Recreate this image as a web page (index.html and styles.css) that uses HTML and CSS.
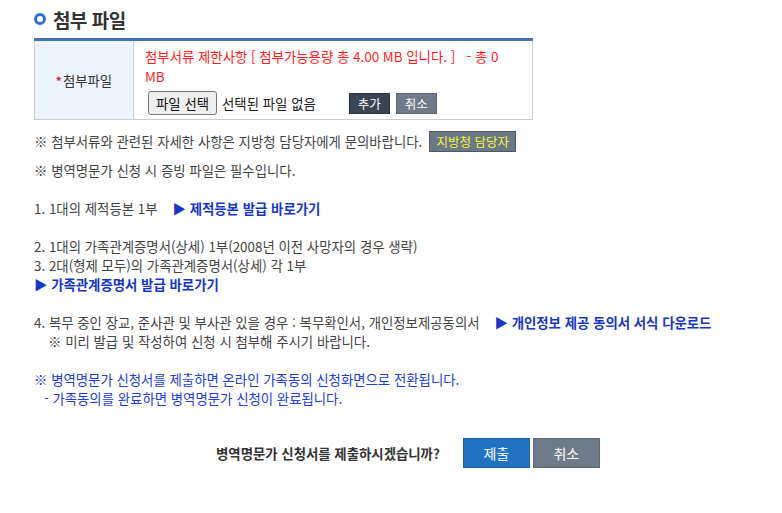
FILE: index.html
```html
<!DOCTYPE html>
<html lang="ko">
<head>
<meta charset="utf-8">
<link rel="stylesheet" href="styles.css">
</head>
<body>
<div class="page">
  <h2 class="title"><span class="ring"></span>첨부 파일</h2>
  <table class="form">
    <tr>
      <th><span class="req">*</span>첨부파일</th>
      <td>
        <div class="limit">첨부서류 제한사항 [ 첨부가능용량 총 4.00 MB 입니다. ]&nbsp;&nbsp; - 총 0 MB</div>
        <div class="filerow">
          <span class="filebtn">파일 선택</span>
          <span class="nofile">선택된 파일 없음</span>
          <span class="sbtn dark">추가</span>
          <span class="sbtn gray">취소</span>
        </div>
      </td>
    </tr>
  </table>

  <p class="note first">※ 첨부서류와 관련된 자세한 사항은 지방청 담당자에게 문의바랍니다.<span class="staff">지방청 담당자</span></p>
  <p class="note second">※ 병역명문가 신청 시 증빙 파일은 필수입니다.</p>

  <p class="block">1. 1대의 제적등본 1부 &nbsp;&nbsp; <a class="link">▶ 제적등본 발급 바로가기</a></p>

  <div class="block">
    <p>2. 1대의 가족관계증명서(상세) 1부(2008년 이전 사망자의 경우 생략)</p>
    <p>3. 2대(형제 모두)의 가족관계증명서(상세) 각 1부</p>
    <p><a class="link">▶ 가족관계증명서 발급 바로가기</a></p>
  </div>

  <div class="block">
    <p>4. 복무 중인 장교, 준사관 및 부사관 있을 경우 : 복무확인서, 개인정보제공동의서 &nbsp;&nbsp; <a class="link">▶ 개인정보 제공 동의서 서식 다운로드</a></p>
    <p class="indent">※ 미리 발급 및 작성하여 신청 시 첨부해 주시기 바랍니다.</p>
  </div>

  <div class="block blue">
    <p>※ 병역명문가 신청서를 제출하면 온라인 가족동의 신청화면으로 전환됩니다.</p>
    <p class="indent2">- 가족동의를 완료하면 병역명문가 신청이 완료됩니다.</p>
  </div>

  <div class="confirm">
    <span class="question">병역명문가 신청서를 제출하시겠습니까?</span>
    <span class="bigbtn submit">제출</span>
    <span class="bigbtn cancel">취소</span>
  </div>
</div>
</body>
</html>
```

FILE: styles.css
```css
* { box-sizing: border-box; }
html, body { margin: 0; padding: 0; background: #fff; }
body {
  font-family: "Malgun Gothic", "Noto Sans CJK KR", "Noto Sans", sans-serif;
  font-size: 13.4px;
  color: #444;
}
p { margin: 0; line-height: 19px; }
.page { padding: 6px 0 0 34px; width: 760px; }

.title {
  margin: 0;
  display: flex;
  align-items: center;
  font-size: 19px;
  font-weight: 700;
  color: #333;
  height: 26px;
  letter-spacing: -0.5px;
}
.ring {
  width: 12px; height: 12px;
  border: 3px solid #2e6fd0;
  border-radius: 50%;
  margin: 0 7px 0 0;
}

.form {
  margin-top: 6px;
  width: 499px;
  border-collapse: collapse;
  border-top: 3px solid #4470b8;
  border-bottom: 1px solid #ccc;
}
.form th {
  width: 99px;
  background: #eef4fd;
  border-left: 1px solid #ccc;
  border-right: 1px solid #ccc;
  font-weight: 400;
  color: #333;
  font-size: 13.4px;
  padding: 0;
}
.req { color: #d0282e; font-weight: 700; font-size: 12px; margin-right: 1px; }
.form td {
  border-right: 1px solid #ccc;
  padding: 5px 22px 4px 11px;
  vertical-align: top;
}
.limit { color: #ff1c1c; line-height: 20px; }
.filerow { display: flex; align-items: center; margin-top: 5px; height: 24px; }
.filebtn {
  display: inline-flex; align-items: center; justify-content: center;
  height: 24px; padding: 0 7px;
  margin-left: 3px;
  border: 1px solid #767676;
  border-radius: 3px;
  background: #efefef;
  color: #111;
}
.nofile { margin-left: 5px; color: #222; }
.sbtn {
  display: inline-flex; align-items: center; justify-content: center;
  width: 41px; height: 21px;
  color: #fff; font-size: 12.5px;
  border: 1px solid transparent;
}
.sbtn.dark { background: #3b4653; border-color: #2d3742; margin-left: 33px; }
.sbtn.gray { background: #6f7b88; border-color: #5e6875; margin-left: 6px; }

.note.first { margin-top: 11px; display: flex; align-items: center; height: 21px; }
.staff {
  display: inline-flex; align-items: center; justify-content: center;
  width: 87px; height: 21px;
  margin-left: 7px;
  background: #6c7885;
  border: 1px solid #4f5864;
  color: #f5f53a;
  font-size: 12.5px;
}
.note.second { margin-top: 9px; }
.block { margin-top: 19px; }
.link { color: #1537c4; font-weight: 700; text-decoration: none; }
.indent { padding-left: 14px; }
.blue { color: #2240d6; }
.indent2 { padding-left: 10px; }

.confirm {
  margin-top: 30px;
  display: flex;
  align-items: center;
  padding-left: 182px;
}
.question { font-weight: 700; color: #333; }
.bigbtn {
  display: inline-flex; align-items: center; justify-content: center;
  width: 67px; height: 30px;
  color: #fff; font-size: 14px;
  border: 1px solid transparent;
}
.bigbtn.submit { background: #2272c3; border-color: #1c60a8; margin-left: 23px; }
.bigbtn.cancel { background: #6f7b88; border-color: #5d6773; margin-left: 3px; }
```
